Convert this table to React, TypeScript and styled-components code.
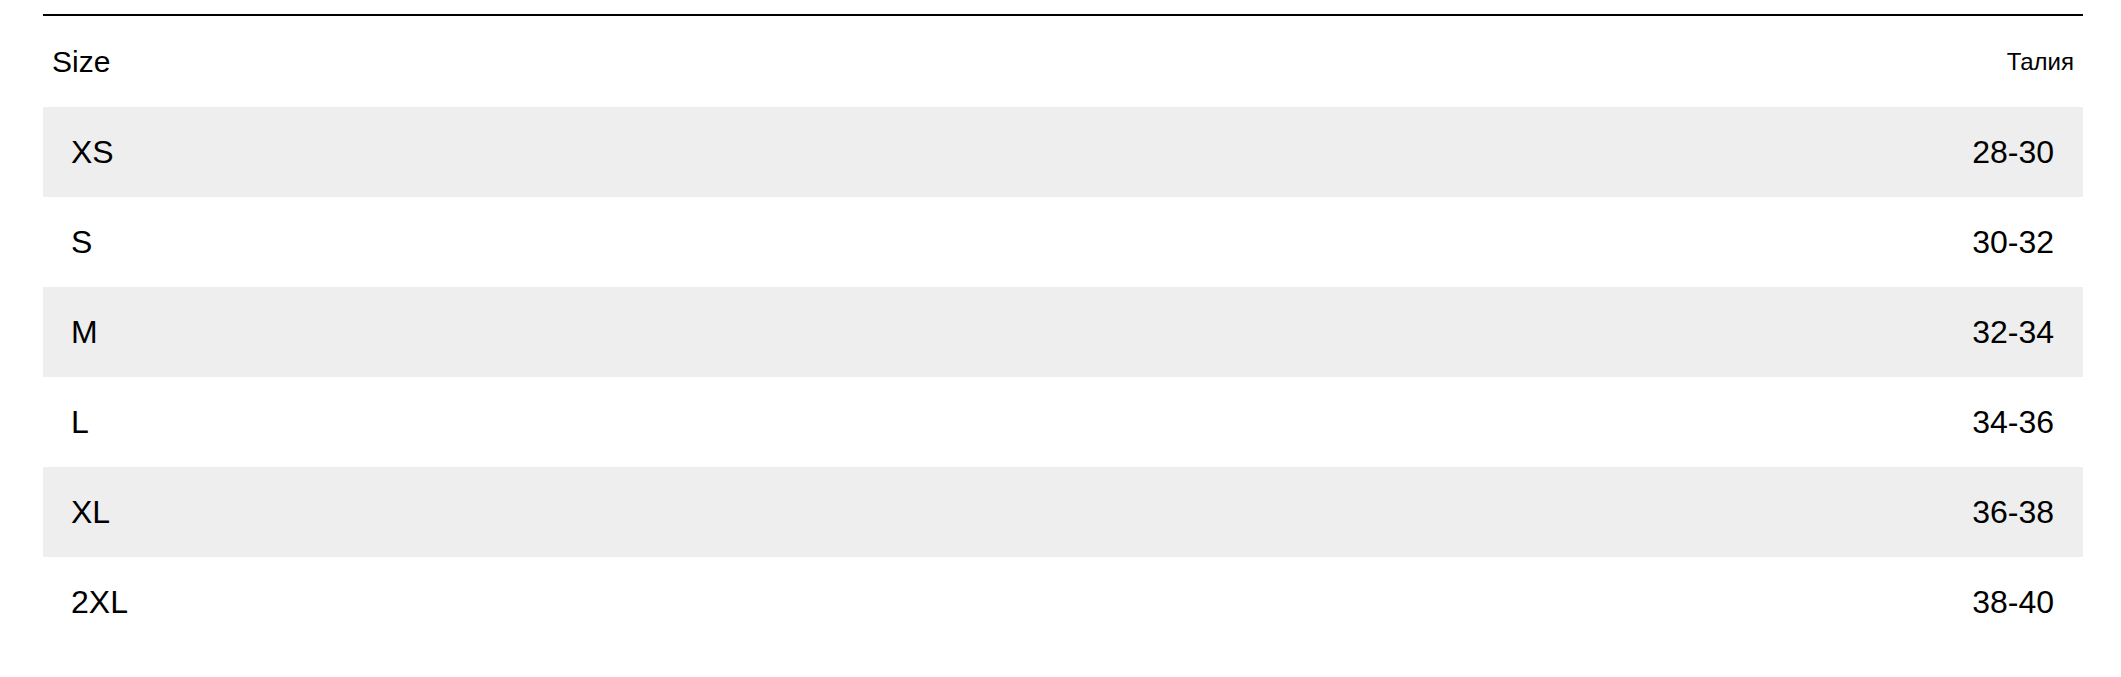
import React from "react";
import styled, { createGlobalStyle } from "styled-components";

const Global = createGlobalStyle`
  html, body { margin: 0; padding: 0; background: #fff; }
  body { font-family: "Liberation Sans", Arial, sans-serif; color: #000; }
`;

const Page = styled.div`
  padding: 14px 38px 0 43px;
`;

const Table = styled.div`
  border-top: 2px solid #000;
  display: flex;
  flex-direction: column;
`;

const HeaderRow = styled.div`
  height: 91px;
  display: flex;
  align-items: center;
  justify-content: space-between;
  padding: 0 9px;
`;

const HeadLeft = styled.span`
  font-size: 30px;
`;

const HeadRight = styled.span`
  font-size: 24px;
`;

const Row = styled.div<{ $shaded: boolean }>`
  height: 90px;
  display: flex;
  align-items: center;
  justify-content: space-between;
  padding: 0 29px 0 28px;
  background: ${(p) => (p.$shaded ? "#eeeeee" : "#ffffff")};
  font-size: 32px;
`;

const rows: [string, string][] = [
  ["XS", "28-30"],
  ["S", "30-32"],
  ["M", "32-34"],
  ["L", "34-36"],
  ["XL", "36-38"],
  ["2XL", "38-40"],
];

export default function App() {
  return (
    <>
      <Global />
      <Page>
        <Table>
          <HeaderRow>
            <HeadLeft>Size</HeadLeft>
            <HeadRight>Талия</HeadRight>
          </HeaderRow>
          {rows.map(([s, w], i) => (
            <Row key={s} $shaded={i % 2 === 0}>
              <span>{s}</span>
              <span>{w}</span>
            </Row>
          ))}
        </Table>
      </Page>
    </>
  );
}
